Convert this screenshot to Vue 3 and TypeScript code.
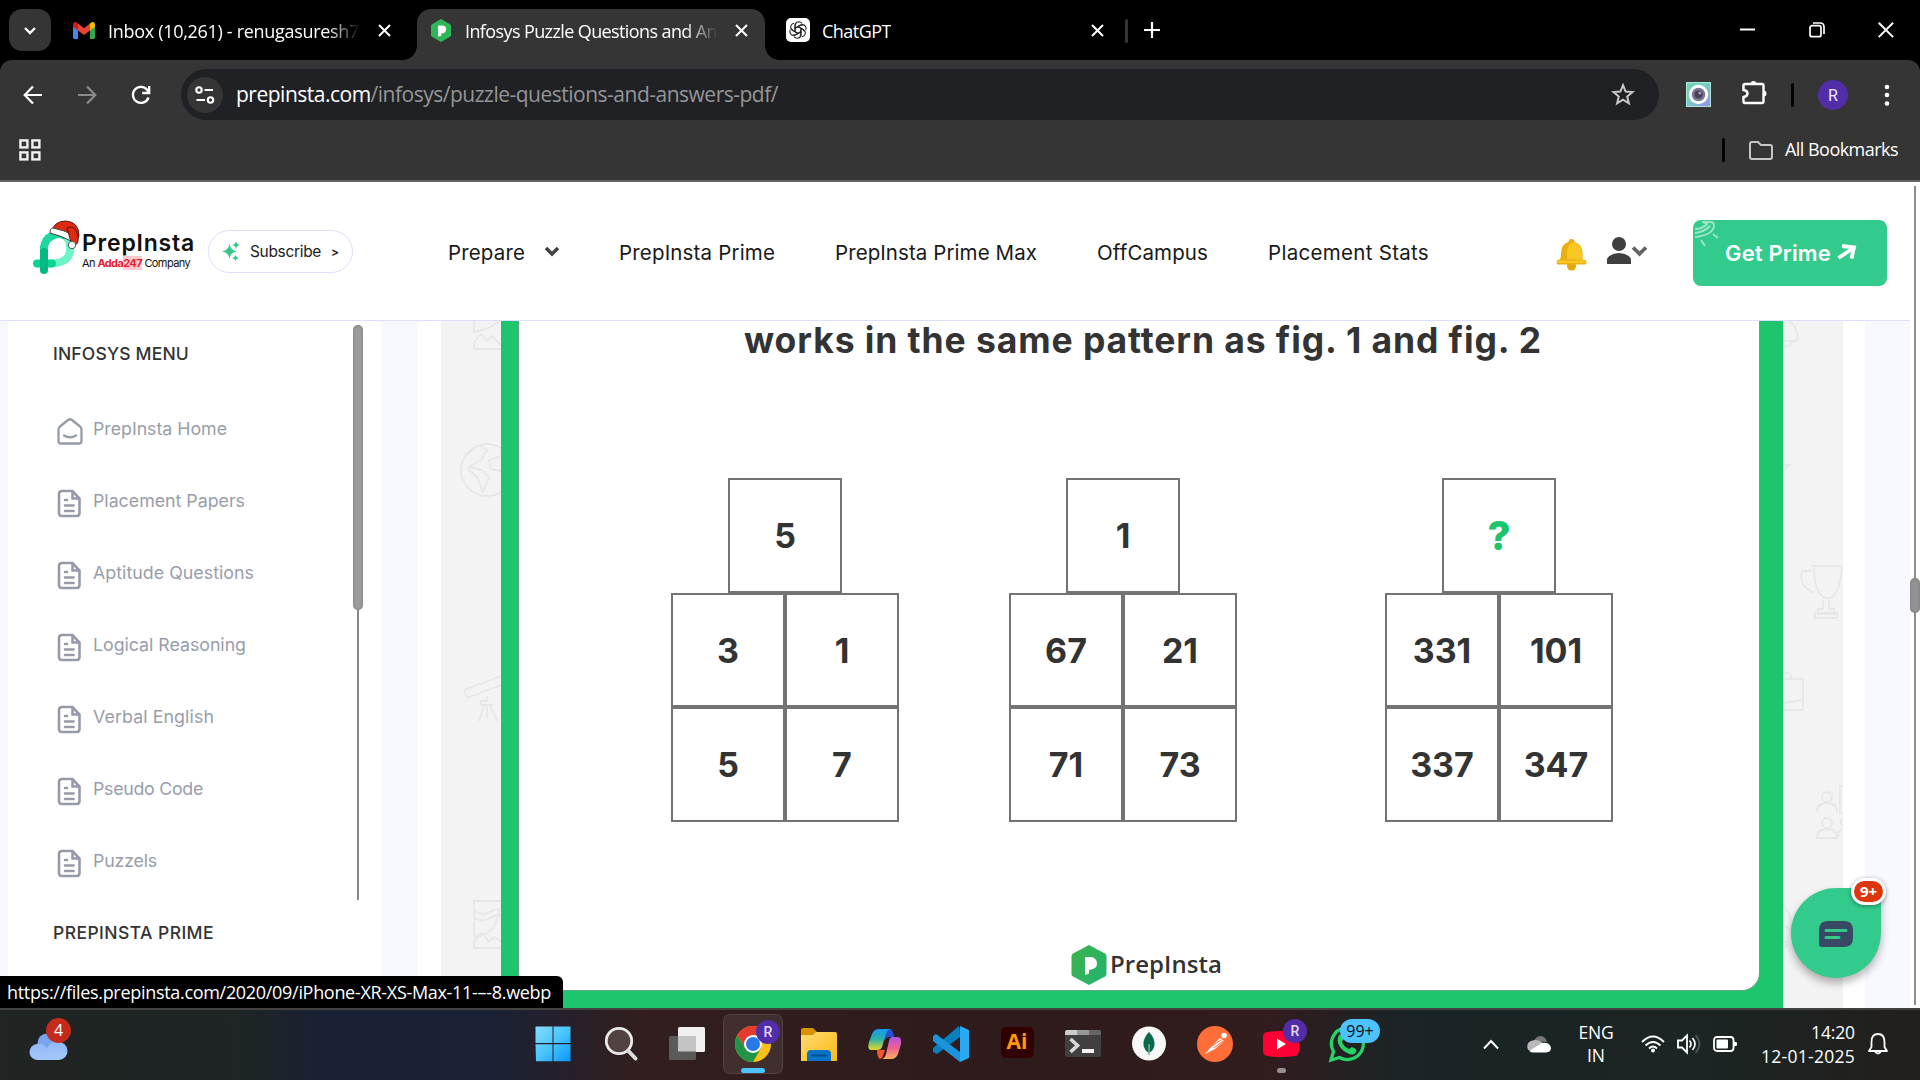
<script setup lang="ts">
interface Figure { id: number; top: string; cells: string[]; accent?: boolean }

const figures: Figure[] = [
  { id: 1, top: '5', cells: ['3', '1', '5', '7'] },
  { id: 2, top: '1', cells: ['67', '21', '71', '73'] },
  { id: 3, top: '?', cells: ['331', '101', '337', '347'], accent: true },
]

const menu: { label: string; width: number }[] = [
  { label: 'PrepInsta Home', width: 134 },
  { label: 'Placement Papers', width: 152 },
  { label: 'Aptitude Questions', width: 161 },
  { label: 'Logical Reasoning', width: 153 },
  { label: 'Verbal English', width: 121 },
  { label: 'Pseudo Code', width: 110 },
  { label: 'Puzzels', width: 64 },
]

const nav: { label: string; width: number }[] = [
  { label: 'PrepInsta Prime', width: 156 },
  { label: 'PrepInsta Prime Max', width: 202 },
  { label: 'OffCampus', width: 111 },
  { label: 'Placement Stats', width: 161 },
]

// Tracks a line of text out (or in) so that it fills the given width in pixels.
const vFit = {
  mounted(el: HTMLElement, binding: { value: number }) {
    const natural = el.getBoundingClientRect().width
    const count = (el.textContent ?? '').length
    if (count > 0) el.style.letterSpacing = `${(binding.value - natural) / count}px`
  },
}
</script>

<template>
  <div class="screen">
    <header class="tabs">
      <div class="tab-search">
        <svg width="14" height="9" viewBox="0 0 14 9"><path d="M2 2l5 5 5-5" fill="none" stroke="#fff" stroke-width="2.4" /></svg>
      </div>
      <div class="tab tab-mail">
        <svg width="22" height="17" viewBox="0 0 22 17">
          <path d="M0 2.5V15.500Q0 17 1.500 17H5V7z" fill="#4285f4" />
          <path d="M22 2.500V15.500Q22 17 20.500 17H17V7z" fill="#34a853" />
          <path d="M17 1.500V8.500L22 4.700V2.500Q21.500-1 18.200.5z" fill="#fbbc04" />
          <path d="M0 2.500Q.5-1 3.800.5L5 1.500V8.500L0 4.700z" fill="#c5221f" />
          <path d="M5 1.500l6 4.700 6-4.700v7L11 13 5 8.500z" fill="#ea4335" />
        </svg>
        <div class="tab-title fade"><span v-fit="251">Inbox (10,261) - renugasuresh7</span></div>
        <svg class="x" width="13" height="13" viewBox="0 0 13 13"><path d="M1 1l11 11M12 1L1 12" stroke="#fff" stroke-width="2" /></svg>
      </div>
      <div class="tab tab-active">
        <svg width="20" height="23" viewBox="0 0 20 23">
          <path d="M10 0l9 5.200q1 .6 1 1.600v9.400q0 1-1 1.600L10 23l-9-5.200q-1-.6-1-1.600V6.800q0-1 1-1.600z" fill="#2db757" />
          <path d="M7 6.500h4.200q4 0 4 3.800 0 3.600-4 4.200l-1 .2V17L7 17.500z" fill="#fff" />
        </svg>
        <div class="tab-title fade"><span v-fit="252">Infosys Puzzle Questions and An</span></div>
        <svg class="x" width="13" height="13" viewBox="0 0 13 13"><path d="M1 1l11 11M12 1L1 12" stroke="#fff" stroke-width="2" /></svg>
        <i class="curve left"></i><i class="curve right"></i>
      </div>
      <div class="tab tab-chat">
        <svg width="24" height="24" viewBox="0 0 24 24">
          <rect width="24" height="24" rx="5" fill="#fff" />
          <g fill="none" stroke="#222" stroke-width="1.100">
            <path v-for="n in 6" :key="n" :transform="`rotate(${n * 60} 12 12)`" d="M9 13.700V7.600Q9.300 3.800 12.800 3.700q2 0 3.200 1.600M9.200 10.200l5-2.900q1.300-.7 2.500 0" />
          </g>
        </svg>
        <span class="tab-title" v-fit="69">ChatGPT</span>
        <svg class="x" width="13" height="13" viewBox="0 0 13 13"><path d="M1 1l11 11M12 1L1 12" stroke="#fff" stroke-width="2" /></svg>
      </div>
      <i class="tab-divider"></i>
      <svg class="plus" width="16" height="16" viewBox="0 0 16 16"><path d="M8 0v16M0 8h16" stroke="#fff" stroke-width="2.200" /></svg>
      <div class="window-controls">
        <svg width="16" height="16" viewBox="0 0 16 16"><path d="M0 7.500h15" stroke="#fff" stroke-width="2" /></svg>
        <svg width="16" height="16" viewBox="0 0 16 16"><g fill="none" stroke="#fff" stroke-width="1.700"><rect x="1" y="3.700" width="11" height="11" rx="2" /><path d="M4 1h7q4 0 4 4v7" /></g></svg>
        <svg width="16" height="16" viewBox="0 0 16 16"><path d="M.7.7l14.400 14.400M15.100.7L.7 15.100" stroke="#fff" stroke-width="2" /></svg>
      </div>
    </header>

    <section class="chrome">
      <div class="toolbar">
        <div class="nav-buttons">
          <svg width="20" height="20" viewBox="0 0 20 20"><path d="M19 10H2M10 1.500L1.700 10l8.300 8.500" fill="none" stroke="#fff" stroke-width="2.200" /></svg>
          <svg width="20" height="20" viewBox="0 0 20 20"><path d="M1 10h17M10 1.500l8.300 8.500-8.300 8.500" fill="none" stroke="#8b8b8b" stroke-width="2.200" /></svg>
          <svg width="20" height="20" viewBox="0 0 20 20"><path d="M17.500 12.500A8 8 0 1 1 16.300 5l1.500 2.500M18.200 1v7h-7" fill="none" stroke="#fff" stroke-width="2.300" /></svg>
        </div>
        <div class="omnibox">
          <div class="site-info">
            <svg width="20" height="18" viewBox="0 0 20 18"><g fill="none" stroke="#fff" stroke-width="2.100"><circle cx="4" cy="4" r="2.700" /><path d="M9.500 4H18M1.500 14H10" /><circle cx="15.500" cy="14" r="2.700" /></g></svg>
          </div>
          <span class="url" v-fit="542"><b>prepinsta.com</b>/infosys/puzzle-questions-and-answers-pdf/</span>
          <svg class="star" width="24" height="23" viewBox="0 0 24 23"><path d="M12 2.200l2.600 6.400 6.900.5-5.300 4.500 1.700 6.800-5.900-3.700-5.900 3.700 1.700-6.800-5.300-4.500 6.900-.5z" fill="none" stroke="#c7c7c7" stroke-width="2" /></svg>
        </div>
        <svg class="ext" width="25" height="25" viewBox="0 0 25 25">
          <defs><linearGradient id="lens" x2="1" y2="1"><stop offset=".4" stop-color="#72d3bd" /><stop offset="1" stop-color="#9b8cf0" /></linearGradient></defs>
          <rect width="25" height="25" fill="#a9e6d5" /><rect x="1" y="1" width="23" height="23" fill="url(#lens)" />
          <circle cx="12.500" cy="12.500" r="9.700" fill="#fff" /><circle cx="12.500" cy="12.500" r="6.800" fill="#7c7392" /><circle cx="12.500" cy="12.500" r="4" fill="#483f58" /><circle cx="13.800" cy="11" r="1.500" fill="#aaa0b8" />
        </svg>
        <svg class="puzzle" width="26" height="25" viewBox="0 0 26 25"><path d="M3 4h17q1.500 0 1.500 1.500V21q0 2-1.500 2H3q-1.500 0-1.500-1.500V17q4-.5 4-3.500t-4-3.500V5.500Q1.500 4 3 4z" fill="none" stroke="#fff" stroke-width="2.400" /><path d="M8.500 4a3 3 0 0 1 6 0zM21.500 10.500a3 3 0 0 1 0 6z" fill="#fff" /></svg>
        <i class="bar"></i>
        <span class="avatar">R</span>
        <svg class="dots" width="6" height="24" viewBox="0 0 6 24"><g fill="#fff"><circle cx="3" cy="4" r="2.300" /><circle cx="3" cy="12" r="2.300" /><circle cx="3" cy="20.500" r="2.300" /></g></svg>
      </div>
      <div class="bookmarks">
        <svg width="22" height="22" viewBox="0 0 22 22"><g fill="none" stroke="#f1f1f1" stroke-width="2.400"><rect x="1.400" y="1.400" width="7" height="7" /><rect x="13.400" y="1.400" width="7" height="7" /><rect x="1.400" y="13.400" width="7" height="7" /><rect x="13.400" y="13.400" width="7" height="7" /></g></svg>
        <i class="bar"></i>
        <svg class="folder" width="24" height="19" viewBox="0 0 24 19"><path d="M1 3q0-2 2-2h6l3 3h9q2 0 2 2v10q0 2-2 2H3q-2 0-2-2z" fill="none" stroke="#c7c7c7" stroke-width="2" /></svg>
        <span class="all-bookmarks" v-fit="113">All Bookmarks</span>
      </div>
    </section>

    <main class="viewport">
      <div class="page">
        <div class="site-header">
          <div class="logo">
            <svg width="40" height="54" viewBox="0 0 40 54">
              <g fill="none" stroke-linecap="round" stroke-width="8">
                <path d="M11 44V28" stroke="#04b982" /><path d="M20 17.500Q32 10 38 22q6 22-18 22.500" stroke="#6df5c5" transform="translate(-2 -1)" />
                <path d="M11 29q0-10 9-13.500 6-2.500 10-.5" stroke="#20d7a1" /><path d="M4 43.500h15" stroke="#0bd690" /><path d="M11 32v18" stroke="#04b982" />
              </g>
              <path d="M18.500 12Q21 1 33 1q13 1 13 15l-4 8-4-5-1-2z" fill="#df2a12" stroke="#5e1710" />
              <path d="M17 13q0-5 3-5 11 2 20 7l-2 6q-9-5-21-8z" fill="#fff" stroke="#444" />
            </svg>
            <svg class="pom" width="14" height="26" viewBox="0 0 14 26"><path d="M0 4Q8 0 11 12q1 8-3 9L4 18z" fill="#df2a12" stroke="#5e1710" /><circle cx="5" cy="21" r="3.700" fill="#fff" stroke="#555" /></svg>
            <div class="wordmark">
              <strong v-fit="113">PrepInsta</strong>
              <small v-fit="108">An <em>Adda<u>247</u></em> Company</small>
            </div>
          </div>
          <div class="subscribe">
            <svg width="19" height="20" viewBox="0 0 19 20"><path d="M7.500 3q1 6 7 7.500-6 1-7 7-1-6-7.500-7Q6.500 9 7.500 3zM14 0q.5 3.500 4 4-3.500.5-4 4-.5-3.500-4-4 3.500-.5 4-4zM13.500 13.500q.5 3 3.500 3.500-3 .5-3.500 3-.5-2.500-3.500-3 3-.5 3.500-3.500z" fill="#33c887" /></svg>
            <span v-fit="71">Subscribe</span><span class="gt">&gt;</span>
          </div>
          <nav class="site-nav">
            <a class="prepare"><span v-fit="77">Prepare</span><svg width="16" height="12" viewBox="0 0 16 12"><path d="M2 3l6 6 6-6" fill="none" stroke="#444" stroke-width="3.600" /></svg></a>
            <a v-for="item in nav" :key="item.label" v-fit="item.width">{{ item.label }}</a>
          </nav>
          <svg class="bell" width="31" height="32" viewBox="0 0 31 32"><circle cx="15.500" cy="28" r="4.500" fill="#e5a70d" /><path d="M12.500 4a3 3 0 0 1 6 0q8 2 8 12v6h3q2 2 0 4.500H1.500Q-.5 24 1.500 22 5 22 5 17 4.500 6 12.500 4z" fill="#e9b012" /><path d="M11 21V13q1-8 7-8.500 8 2 8 12 0 4 1.500 5.500z" fill="#fac623" /><path d="M2 22.500h27q1.500 1 .5 2.500H1.500q-1.500-1 .5-2.500z" fill="#fac623" /></svg>
          <svg class="user" width="24" height="28" viewBox="0 0 24 28"><circle cx="12" cy="7" r="7" fill="#3f3f3f" /><path d="M0 27v-5q2-5 12-6 10 1 12 6v5z" fill="#3f3f3f" /></svg>
          <svg class="user-caret" width="17" height="12" viewBox="0 0 17 12"><path d="M2 2.500l6.500 6.300L15 2.500" fill="none" stroke="#646464" stroke-width="3.800" /></svg>
          <div class="prime">
            <svg class="prime-mark" width="26" height="28" viewBox="0 0 26 28"><g fill="none" stroke="#9ce5c4" stroke-width="2"><path d="M0 8Q7 8 12 3L8 1M0 12Q9 11 15 5M0 16Q18 14 19 5q0-4-3-4H7" /><path d="M6 19l4 6M18 13l5 4" /></g></svg>
            <span v-fit="106">Get Prime</span>
            <svg width="20" height="18" viewBox="0 0 20 18"><path d="M1.500 14L15 5M5 2L17 3.500l-2.500 11" fill="none" stroke="#fff" stroke-width="3.800" /></svg>
          </div>
        </div>

        <div class="content">
          <aside class="sidebar">
            <h2 v-fit="136">INFOSYS MENU</h2>
            <ul>
              <li v-for="(item, index) in menu" :key="item.label">
                <svg v-if="index === 0" width="26" height="28" viewBox="0 0 26 28"><path d="M1.500 11.500q0-2 1.500-3l8-6.500q2-1.500 4 0l8 6.500q1.500 1 1.500 3V23q0 2.500-2.500 2.500H4Q1.500 25.500 1.500 23z" fill="none" stroke="#969baa" stroke-width="2.300" /><path d="M7 17.500q6 3.500 12 0" fill="none" stroke="#969baa" stroke-width="2.400" stroke-linecap="round" /></svg>
                <svg v-else width="26" height="28" viewBox="0 0 26 28"><path d="M5 1h10.500l7 7.500v14.500q0 3-3 3H5q-3 0-3-3V4q0-3 3-3zM15.500 1.500v7H22" fill="none" stroke="#969baa" stroke-width="2.600" /><path d="M8 10h2M8 15.500h8.500M8 21h8.500" stroke="#969baa" stroke-width="2.600" stroke-linecap="round" /></svg>
                <span v-fit="item.width">{{ item.label }}</span>
              </li>
            </ul>
            <h2 class="second" v-fit="161">PREPINSTA PRIME</h2>
            <div class="side-scroll"><i></i></div>
          </aside>

          <div class="article">
            <div class="backdrop">
              <svg class="doodles" width="60" height="687" viewBox="441 321 60 687">
                <g fill="none" stroke="#e7e7e7" stroke-width="1.800">
                  <path d="M474 321v11q18-3 25-11M474 342l7-8 6 7 5-5 9 9M474 342v7h27" />
                  <circle cx="487" cy="470" r="26" /><path d="M466 455l13-10 8 5-6 10-12 7 13 3 7 8-6 14-6-15-9-8M501 456l-12 4 2 9 10 2" />
                  <path d="M464 690l37-14M467 698l34-13M464 690l3 8M487 696v5h-6v4h12M484 706l-5 15M490 706l7 15M487 706v12" />
                  <path d="M501 901h-27v36q22-1 25-27M474 911q9 6 18 0 4-3 9-1M474 918q9 5 18-1 4-3 9-1M474 941l8-8 7 9 5-5 7 4M474 939v9h27" />
                </g>
              </svg>
              <div class="poster">
                <div class="poster-body">
                  <h1><span v-fit="798">works in the same pattern as fig. 1 and fig. 2</span></h1>
                  <div class="figures">
                    <div v-for="figure in figures" :key="figure.id" class="figure">
                      <div class="cell head" :class="{ accent: figure.accent }">{{ figure.top }}</div>
                      <div class="grid"><div v-for="cell in figure.cells" :key="cell" class="cell">{{ cell }}</div></div>
                    </div>
                  </div>
                  <div class="brand">
                    <svg width="36" height="40" viewBox="0 0 36 40"><defs><linearGradient id="hex" x2="1" y2=".6"><stop stop-color="#3db24a" /><stop offset="1" stop-color="#27b36c" /></linearGradient></defs><path d="M18 0l16 8.500q1.500 1 1.500 2.500v18q0 1.500-1.500 2.500L18 40 2 31.500Q.5 30.500.5 29V11Q.5 9.500 2 8.500z" fill="url(#hex)" /><path d="M14 12h6q6 1 6 6.500 0 5-6 6l-2 .5v3.500L14 30z" fill="#fff" /></svg>
                    <span v-fit="112">PrepInsta</span>
                  </div>
                </div>
              </div>
              <svg class="doodles" width="60" height="687" viewBox="1783 321 60 687">
                <g fill="none" stroke="#e7e7e7" stroke-width="1.800">
                  <path d="M1789 321q8 6 8 13l1 4-3 3h-12M1792 341q-1 7-9 5M1783 465h7l-7 6" />
                  <path d="M1811 566h31M1814 566q0 29 12 32h4q10-3 12-32M1811 571h-9q-3 10 4 17l8 5M1823 600v9h-5v5h16v-5h-5v-9M1815 613h22v5h-22z" />
                  <path d="M1783 673h6q2 0 2 6M1783 679h20v31h-20M1783 703l20-3" />
                  <circle cx="1827" cy="797" r="5" /><path d="M1817 812q0-9 10-9t10 9M1843 786h-3v27h3M1817 838q0-9 10-9t10 9z" /><circle cx="1827" cy="823" r="5" /><path d="M1843 818q-5 4 0 8M1838 838q0-8 5-9" />
                  <path d="M1783 904q8 9 8 20v12M1783 925l7 4M1783 942h4q2 4-3 5" />
                </g>
              </svg>
            </div>
          </div>
        </div>

        <div class="chat">
          <svg width="34" height="26" viewBox="0 0 34 26"><path d="M9 0h16q9 0 9 9v8q0 9-9 9H3q-3 0-3-3V9Q0 0 9 0z" fill="#374963" /><path d="M7 9.500h20M7 16.500h13" stroke="#33cb8b" stroke-width="3" stroke-linecap="round" /></svg>
          <span>9+</span>
        </div>
        <div class="status"><span v-fit="544">https://files.prepinsta.com/2020/09/iPhone-XR-XS-Max-11-–-8.webp</span></div>
      </div>
      <div class="scrollbar"><i></i></div>
    </main>

    <footer class="taskbar">
      <div class="weather">
        <svg width="38" height="32" viewBox="0 0 38 32"><defs><linearGradient id="cl" x2="0" y2="1"><stop stop-color="#91b8f8" /><stop offset="1" stop-color="#a2c7fb" /></linearGradient></defs><circle cx="26" cy="8" r="8.500" fill="#f47b17" /><circle cx="17" cy="14" r="9.500" fill="#7ea3ee" /><path d="M8 31a8 8 0 0 1-1-16q7-1 10 5a9 9 0 0 1 11-7 9 9 0 0 1 1 18z" fill="url(#cl)" /></svg>
        <span>4</span>
      </div>
      <div class="apps">
        <div class="app"><svg width="36" height="36" viewBox="0 0 36 36"><defs><linearGradient id="win" x2="1" y2="1"><stop stop-color="#86dcfc" /><stop offset=".5" stop-color="#49c5fa" /><stop offset="1" stop-color="#0a95fb" /></linearGradient></defs><path d="M1 .5h16.500V17H.5V1zM18.500.5h17V17h-17zM.5 18.300h17v17H1zM18.500 18.300h17v17h-17z" fill="url(#win)" /></svg></div>
        <div class="app"><svg width="36" height="36" viewBox="0 0 36 36"><circle cx="16" cy="15" r="12.700" fill="#51413f" stroke="#ebebeb" stroke-width="2.800" /><path d="M25.500 25l7 7.500" stroke="#dcdcdc" stroke-width="4" stroke-linecap="round" /></svg></div>
        <div class="app"><svg width="36" height="36" viewBox="0 0 36 36"><rect x="9" y="1" width="27" height="25" rx="1.500" fill="#f0f0f0" /><rect y="10" width="27" height="24" rx="1.500" fill="#5a5a5a" /><path d="M9 10h18v15.500H9z" fill="#c3c3c3" /></svg></div>
        <div class="app selected"><svg width="36" height="36" viewBox="0 0 36 36"><circle cx="18" cy="18" r="18" fill="#fbc116" /><path d="M18 18L10.200 22.500 2.400 9A18 18 0 0 1 33.600 9H18z" fill="#e53a2f" /><path d="M2.400 9A18 18 0 0 0 18 36l7.800-13.500L18 18l-7.800 4.500z" fill="#229447" /><circle cx="18" cy="18" r="9" fill="#fff" /><circle cx="18" cy="18" r="7" fill="#2778e9" /></svg><b class="profile">R</b><i class="running"></i></div>
        <div class="app"><svg width="36" height="36" viewBox="0 0 36 36"><defs><linearGradient id="fo" x2="1" y2="1"><stop stop-color="#ffdc74" /><stop offset="1" stop-color="#fcb813" /></linearGradient></defs><path d="M0 4q0-2 2-2h10l4 4v5H0z" fill="#d99300" /><path d="M0 9h12l3-3h19q2 0 2 2v27H0z" fill="url(#fo)" /><path d="M6 35v-7q0-4 4-4h16q4 0 4 4v7z" fill="#0973c5" /><path d="M11 29.500h14" stroke="#074b94" stroke-width="2" stroke-linecap="round" /></svg></div>
        <div class="app"><svg width="36" height="36" viewBox="0 0 36 36"><defs><linearGradient id="c1" x2="0" y2="1"><stop stop-color="#1597f2" /><stop offset=".5" stop-color="#31b3a6" /><stop offset="1" stop-color="#e9da23" /></linearGradient><linearGradient id="c2" x2="0" y2="1"><stop stop-color="#ad52e5" /><stop offset=".5" stop-color="#f06292" /><stop offset="1" stop-color="#ffae63" /></linearGradient></defs><path d="M16 3h7q3 0 4 8h-5q-3 0-4 4z" fill="#2550cf" /><path d="M12 3h12q-4 1-5 5l-4 13q-1 3-5 3H4q-4 0-2-8l3-8Q7 3 12 3z" fill="url(#c1)" /><path d="M25 11h6q4 0 3 7l-3 10q-2 5-7 5h-9q3-1 4-5l3-13q1-4 3-4z" fill="url(#c2)" /><path d="M10 24h8l-2 6q-1 3-3 3-3-1-3-9z" fill="#f1592d" /></svg></div>
        <div class="app"><svg width="36" height="36" viewBox="0 0 36 36"><path d="M27 0l9 4v28l-9 4z" fill="#2aa9f3" /><path d="M26 0L0 22v4l4 2 23-17z" fill="#087fbf" /><path d="M0 10l3-2 24 18v10L0 15z" fill="#1b94db" /></svg></div>
        <div class="app"><span class="ai">Ai</span></div>
        <div class="app"><svg width="36" height="36" viewBox="0 0 36 36"><rect y="4" width="36" height="27" rx="2" fill="#404040" /><path d="M0 9V6q0-2 2-2h10v5z" fill="#ccc" /><path d="M12 4h12v5H12z" fill="#999" /><path d="M24 4h10q2 0 2 2v3H24z" fill="#666" /><path d="M5.500 13l7 6.500-7 6.500" fill="none" stroke="#d8d8d8" stroke-width="3.700" /><path d="M17 25h12" stroke="#f1f1f1" stroke-width="4" /></svg></div>
        <div class="app"><svg width="36" height="36" viewBox="0 0 36 36"><circle cx="18" cy="17.500" r="17" fill="#f7f7f7" /><path d="M18 6q6 6 5.500 13Q23 24 18 27q-5-3-5.500-8Q12 12 18 6z" fill="#09694b" /><path d="M18 18v11" stroke="#78af9d" stroke-width="1.500" /></svg></div>
        <div class="app"><svg width="36" height="36" viewBox="0 0 36 36"><circle cx="18" cy="18" r="18" fill="#ff6d38" /><circle cx="27" cy="9.500" r="2.800" fill="#fff" /><path d="M8 28l6-7 9-9 4 3-9 8z" fill="#fff" /><path d="M15 20l9-6M17 22l9-7" stroke="#ff6d38" /></svg></div>
        <div class="app"><svg width="36" height="36" viewBox="0 0 36 36"><path d="M4 6q14-2 28 0 4 .5 4 5v14q0 4-4 5-14 2-28 0-4-1-4-5V11q0-4.500 4-5z" fill="#ff0034" /><path d="M14 12.500v11l9-5.500z" fill="#fff" /></svg><b class="profile">R</b><i class="idle"></i></div>
        <div class="app"><svg width="36" height="36" viewBox="0 0 36 36"><path d="M2 34l2.500-8.500A16 16 0 1 1 10.500 31.500z" fill="none" stroke="#25d366" stroke-width="3.300" /><path d="M10 9q3-1 4.500 4l-1.500 3q2 5 7 7l3-2q5 2 4.500 4-2 5-7 3Q12 25 9 17q-1-5 1-8z" fill="#25d366" /></svg><b class="count">99+</b></div>
      </div>
      <div class="tray">
        <svg class="up" width="16" height="11" viewBox="0 0 16 11"><path d="M1 9.500l7-7.500 7 7.500" fill="none" stroke="#fff" stroke-width="2" /></svg>
        <svg class="cloud" width="24" height="17" viewBox="0 0 24 17"><path d="M7 5q2-5 7-5 5 1 6 6z" fill="#777" /><path d="M1 14q-3-9 7-10 7 0 10 6l-8 5z" fill="#b9b9b9" /><path d="M2 15l13-8q8-1 9 5 0 4-5 4.500H5z" fill="#fff" /></svg>
        <div class="lang"><span v-fit="35">ENG</span><span v-fit="18">IN</span></div>
        <svg class="wifi" width="24" height="18" viewBox="0 0 24 18"><g fill="none" stroke="#fff" stroke-width="1.800"><path d="M1 7Q12-4 23 7M4.500 10.500q7.500-7 15 0M8 13.500q4-4 8 0" /></g><circle cx="12" cy="15.500" r="2" fill="#fff" /></svg>
        <svg class="vol" width="24" height="20" viewBox="0 0 24 20"><path d="M1 6.500h4l5-5v17l-5-5H1z" fill="none" stroke="#fff" stroke-width="1.800" /><path d="M12.500 6.500q3 3.500 0 7M15.500 4q5 6 0 12" fill="none" stroke="#fff" stroke-width="1.700" /><path d="M18.500 1q8 9 0 18" fill="none" stroke="#555" stroke-width="1.700" /></svg>
        <svg class="bat" width="24" height="16" viewBox="0 0 24 16"><rect x="1" y="1" width="19.500" height="14" rx="3" fill="none" stroke="#fff" stroke-width="1.800" /><rect x="3.500" y="3.500" width="11.500" height="9" rx="1" fill="#fff" /><path d="M21 5.500l3 1v3l-3 1z" fill="#fff" /></svg>
        <div class="clock"><span v-fit="44">14:20</span><span v-fit="94">12-01-2025</span></div>
        <svg class="notif" width="20" height="22" viewBox="0 0 20 22"><path d="M3.500 14V9q0-8 6.500-8t6.500 8v5l2.500 4H1z" fill="none" stroke="#fff" stroke-width="1.800" stroke-linejoin="round" /><path d="M7 18.500q3 4 6 0" fill="none" stroke="#fff" stroke-width="1.800" /></svg>
      </div>
    </footer>
  </div>
</template>

<style>
body { margin: 0; overflow: hidden; }
</style>

<style scoped>
* { box-sizing: border-box; }
svg { display: block; flex: none; overflow: visible; }
span { white-space: nowrap; }
.screen { position: relative; z-index: 0; width: 1920px; height: 1080px; display: flex; flex-direction: column; overflow: hidden; background: #fff; font-family: "Open Sans", "Noto Sans", sans-serif; }

.tabs { height: 60px; display: flex; align-items: center; background: #000; color: #fff; flex: none; }
.tab-search { width: 42px; height: 42px; margin-left: 9px; border-radius: 13px; background: #353535; display: flex; align-items: center; justify-content: center; }
.tab { display: flex; align-items: center; font-size: 18px; }
.tab-title { line-height: 30px; padding-top: 2px; overflow: hidden; white-space: nowrap; }
.tab-title span { display: inline-block; }
.tab-mail { width: 366px; padding-left: 22px; }
.tab-mail .tab-title { width: 252px; margin-left: 13px; }
.tab-mail .x { margin-left: 18px; }
.fade { mask-image: linear-gradient(90deg, #000 87%, transparent 100%); }
.tab-active { position: relative; width: 348px; height: 51px; margin-top: 9px; padding: 0 0 9px 14px; background: #353535; border-radius: 14px 14px 0 0; }
.tab-active .tab-title { width: 253px; margin-left: 14px; }
.tab-active .x { margin-left: 17px; }
.curve { position: absolute; bottom: 0; width: 14px; height: 14px; }
.curve.left { left: -14px; background: radial-gradient(circle at 0 0, transparent 13.500px, #353535 14px); }
.curve.right { right: -14px; background: radial-gradient(circle at 100% 0, transparent 13.500px, #353535 14px); }
.tab-chat { width: 360px; padding-left: 21px; }
.tab-chat .tab-title { margin-left: 12px; flex: none; }
.tab-chat .x { margin-left: auto; margin-right: 21px; }
.tab-divider { width: 3px; height: 24px; margin-top: 2px; background: #353535; border-radius: 2px; }
.plus { margin-left: 16px; }
.window-controls { display: flex; gap: 53px; margin: 0 26px 0 auto; }

.chrome { position: relative; height: 122px; flex: none; background: #353535; border-bottom: 2px solid #656363; border-radius: 12px 12px 0 0; }
.chrome::before { content: ""; position: absolute; z-index: -1; inset: 0; background: #000; }
.toolbar { display: flex; align-items: center; padding-top: 9px; }
.nav-buttons { display: flex; gap: 34px; margin-left: 23px; }
.omnibox { width: 1478px; height: 51px; margin-left: 30px; display: flex; align-items: center; background: #202124; border-radius: 26px; }
.site-info { width: 36px; height: 36px; margin-left: 6px; border-radius: 50%; background: #353535; display: flex; align-items: center; justify-content: center; }
.url { margin: -1px 0 0 13px; font-size: 21px; color: #949596; }
.url b { font-weight: 400; color: #fff; }
.star { margin: 0 24px 0 auto; }
.ext { margin-left: 27px; }
.puzzle { margin-left: 31px; margin-top: -4px; }
.bar { width: 3px; height: 24px; background: #000; border-radius: 2px; }
.toolbar .bar { margin-left: 23px; }
.avatar { width: 30px; height: 30px; margin-left: 24px; border-radius: 50%; background: #512da8; color: #f0e8ff; font: 16px/31px Roboto, sans-serif; text-align: center; }
.dots { margin-left: 36px; }
.bookmarks { display: flex; align-items: center; height: 60px; padding: 0 22px 0 19px; color: #fff; font-size: 18px; }
.bookmarks .bar { margin-left: auto; }
.folder { margin-left: 24px; }
.all-bookmarks { margin: -2px 0 0 12px; }

.viewport { height: 826px; flex: none; display: flex; }
.page { width: 1910px; position: relative; overflow: hidden; font-family: Inter, "Liberation Sans", sans-serif; }
.scrollbar { width: 10px; padding-top: 4px; background: linear-gradient(#8c8c8c, #8c8c8c) 4px 4px / 2px 819px no-repeat #fff; }
.scrollbar i { display: block; width: 10px; height: 35px; margin-top: 392px; border-radius: 5px; background: #939393; box-shadow: inset 0 0 3px #777; }
.site-header { height: 139px; display: flex; align-items: center; border-bottom: 1px solid #dcdffc; background: #fff; }
.logo { position: relative; display: flex; margin: -9px 0 0 33px; width: 161px; }
.pom { position: absolute; left: 34px; top: 4px; }
.wordmark { display: flex; flex-direction: column; align-items: flex-start; margin: 11px 0 0 9px; }
.wordmark strong { font: 600 23px/25px Inter, sans-serif; color: #111; }
.wordmark small { margin-top: 0; font: 400 11px/14px Inter, sans-serif; color: #111; white-space: nowrap; }
.wordmark em { font-style: normal; font-weight: 700; color: #e51c2e; }
.wordmark u { text-decoration: none; background: #ffc9cd; }
.subscribe { width: 145px; height: 43px; margin-left: 14px; padding-left: 13px; display: flex; align-items: center; border: 1px solid #dcdffc; border-radius: 22px; font-size: 15.500px; color: #222; }
.subscribe span { margin-left: 9px; }
.subscribe .gt { margin-left: 10px; font-weight: 600; font-size: 12px; }
.site-nav { display: flex; align-items: center; gap: 60px; margin: 3px 0 0 95px; font-size: 20.500px; color: #191919; white-space: nowrap; }
.prepare { display: flex; align-items: center; gap: 19px; margin-right: -1px; }
.prepare svg { margin-top: -3px; }
.bell { margin-left: 127px; margin-top: 6px; }
.user { margin-left: 20px; }
.prime { position: relative; width: 194px; height: 66px; margin: 4px 0 0 45px; padding-left: 32px; display: flex; align-items: center; gap: 6px; border-radius: 8px; background: #33cb8b; color: #fff; font-size: 22px; font-weight: 600; }
.prime-mark { position: absolute; left: 2px; top: 1px; }

.content { height: 687px; display: flex; background: #f8f9ff; }
.sidebar { position: relative; width: 373px; margin-left: 8px; padding: 19px 0 0 45px; background: #fff; }
.sidebar h2 { width: max-content; margin: 0; font: 500 17.500px/27px Inter, sans-serif; color: #333; white-space: nowrap; }
.sidebar ul { list-style: none; margin: 26px 0 0 4px; padding: 0; }
.sidebar li { height: 72px; display: flex; align-items: center; gap: 10px; font-size: 17.800px; color: #989dab; }
.sidebar li svg { margin-top: 5px; }
.sidebar li span { margin-top: -2px; }
.sidebar h2.second { margin-top: 22px; }
.side-scroll { position: absolute; left: 345px; top: 4px; width: 10px; height: 575px; background: linear-gradient(#888, #888) 4px 0 / 2px 100% no-repeat; }
.side-scroll i { display: block; height: 285px; border-radius: 5px; background: #9c9c9c; box-shadow: inset 0 0 3px #777; }
.article { margin-left: 37px; width: 1447px; padding: 0 22px 0 23px; background: #fff; }
.backdrop { display: flex; height: 687px; background: #f3f3f3; }
.doodles { overflow: hidden; }
.poster { width: 1282px; padding: 0 23px 17px 17px; background: #1dc56d; }
.poster-body { height: 670px; display: flex; flex-direction: column; background: #fff; border: 1px solid #61a785; border-top: 0; border-radius: 0 0 18px 18px; color: #333; font-weight: 700; }
.poster h1 { margin: 0; padding-left: 225px; font-size: 35.500px; line-height: 39px; white-space: nowrap; }
.poster h1 span { display: inline-block; }
.figures { display: flex; margin: 118px 0 0 152px; }
.figure { display: flex; flex-direction: column; align-items: center; width: 228px; }
.figure + .figure { margin-left: 110px; }
.figure:last-child { margin-left: 148px; }
.grid { display: grid; grid-template-columns: repeat(2, 114px); }
.cell { width: 114px; height: 114.500px; display: flex; align-items: center; justify-content: center; border: 2px solid #737373; font-size: 34px; padding-top: 1px; }
.accent { color: #1dc56d; font-size: 40px; font-weight: 800; padding-top: 0; }
.brand { display: flex; align-items: center; gap: 3px; margin: 123px 0 0 552px; font: 600 24px/30px "Open Sans", sans-serif; }
.brand span { margin-top: -1px; }
.chat { position: absolute; left: 1791px; top: 706px; width: 90px; height: 90px; border-radius: 50% 0 50% 50%; background: #33cb8b; box-shadow: 0 5px 8px rgba(0, 0, 0, .3); display: flex; align-items: center; justify-content: center; }
.chat svg { margin-top: 2px; }
.chat span { position: absolute; left: 60px; top: -10px; width: 35px; height: 27px; border: 3px solid #fff; border-radius: 14px; background: #dd360c; color: #fff; font: 700 15px/20px "Open Sans", sans-serif; text-align: center; box-shadow: 0 1px 4px rgba(0, 0, 0, .4); }
.status { position: absolute; left: 0; bottom: 0; width: 563px; height: 32px; padding-left: 7px; background: #000; color: #fff; border-radius: 0 6px 0 0; font: 18px/33px "Open Sans", sans-serif; }

.taskbar { position: relative; height: 72px; flex: none; display: flex; border-top: 2px solid #454242; background: linear-gradient(90deg, #202423 0, #1e2524 240px, #1a2135 330px, #1a2236 490px, #321e1e 640px, #2e1b1b 1000px, #311c1e 1270px, #1b2426 1400px, #1b2523 1700px, #231f1d 1920px); color: #fff; }
.weather { position: relative; width: 40px; margin: 19px 0 0 30px; }
.weather span { position: absolute; left: 16px; top: -11px; width: 25px; height: 25px; border-radius: 50%; background: #c42b1c; font-size: 16px; line-height: 24px; text-align: center; }
.apps { display: flex; gap: 6px; margin: 4px 0 0 453px; }
.app { position: relative; width: 60px; height: 60px; display: flex; align-items: center; justify-content: center; }
.app:first-child { margin-right: 2px; }
.selected { background: rgba(255, 255, 255, .08); border: 1px solid rgba(255, 255, 255, .09); border-radius: 7px; }
.profile { position: absolute; left: 32px; top: 5px; width: 24px; height: 24px; border-radius: 50%; background: #512da8; color: #e7dcf8; font: 500 14px/24px Roboto, sans-serif; text-align: center; }
.running, .idle { position: absolute; bottom: 0; width: 24px; height: 5px; border-radius: 3px; background: #4cc2ff; }
.idle { bottom: 1px; width: 9px; background: #989090; }
.ai { width: 33px; height: 31px; margin-top: -3px; border-radius: 5px; background: #330000; color: #ff9a00; font: 700 21px/29px "Open Sans", sans-serif; text-align: center; }
.count { position: absolute; left: 23px; top: 5px; width: 40px; height: 24px; border-radius: 12px; background: #4cc2ff; color: #111; font-weight: 400; font-size: 16px; line-height: 24px; text-align: center; }
.tray { display: flex; align-items: center; margin-left: auto; padding-bottom: 2px; font-size: 17.500px; }
.cloud { margin-left: 28px; }
.lang { display: flex; flex-direction: column; align-items: center; width: 40px; margin-left: 25px; line-height: 23px; }
.wifi { margin-left: 25px; }
.vol { margin-left: 12px; }
.bat { margin-left: 12px; }
.clock { display: flex; flex-direction: column; align-items: flex-end; width: 94px; margin-left: 24px; line-height: 24px; }
.notif { margin: 0 32px 0 13px; }
</style>
